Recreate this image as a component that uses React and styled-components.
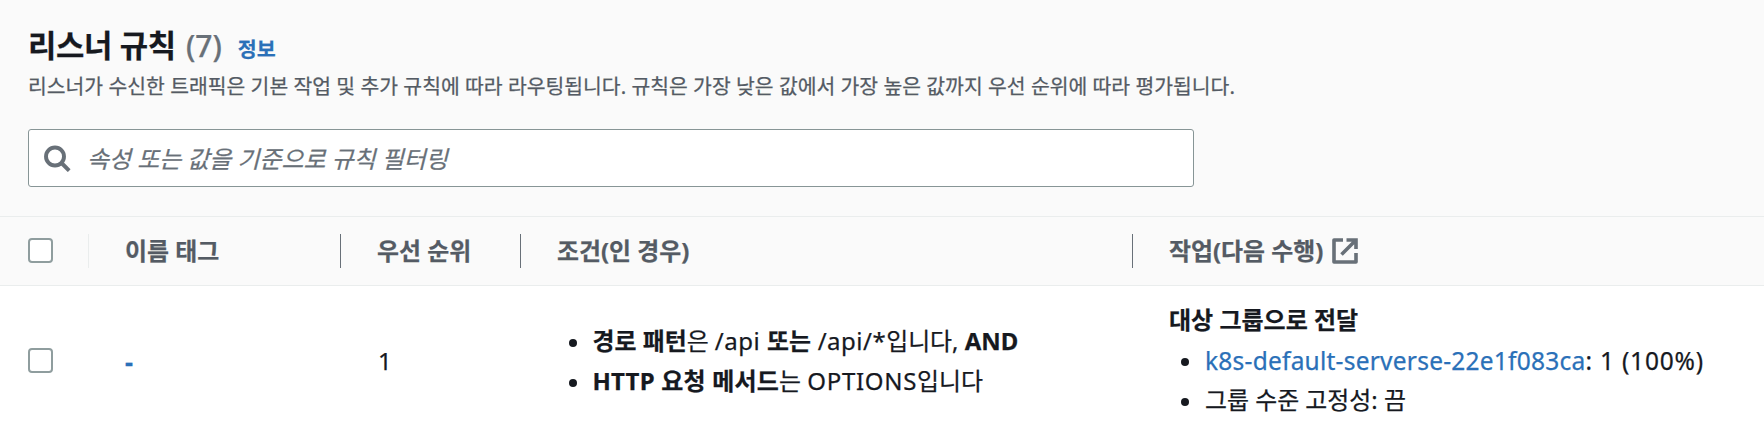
import React from "react";
import styled, { createGlobalStyle, css } from "styled-components";

const GlobalStyle = createGlobalStyle`
  * { box-sizing: border-box; }
  html, body { margin: 0; background: #fff; }
  body {
    font-family: "Noto Sans", "Noto Sans CJK KR", sans-serif;
    color: #16191f;
    font-size: 24px;
    overflow: hidden;
  }
`;

const Page = styled.main`
  width: 1764px;
  height: 434px;
  overflow: hidden;
  background: #fff;
  white-space: nowrap;
  -webkit-text-stroke: 0.25px;
`;

const Header = styled.header`
  height: 217px;
  padding: 25px 28px 0;
  background: #fafafa;
  border-bottom: 1px solid #eaeded;
`;

const TitleRow = styled.div`
  display: flex;
  align-items: baseline;
  height: 45px;
  line-height: 40px;
`;

const Title = styled.h1`
  margin: 0;
  font-size: 30.8px;
  font-weight: 700;
  line-height: 40px;
  letter-spacing: -0.3px;
`;

const Counter = styled.span`
  margin-left: 10px;
  font-size: 30px;
  font-weight: 500;
  color: #687078;
`;

const InfoLink = styled.a`
  margin-left: 16px;
  font-size: 20.6px;
  font-weight: 700;
  color: #2a70b8;
`;

const Description = styled.p`
  margin: 0;
  height: 32px;
  line-height: 32px;
  font-size: 20.43px;
  color: #545b64;
`;

const SearchBox = styled.div`
  display: flex;
  align-items: center;
  width: 1166px;
  height: 58px;
  margin-top: 27px;
  padding-left: 15px;
  background: #fff;
  border: 1px solid #879596;
  border-radius: 3px;
`;

const Placeholder = styled.span`
  margin: -2px 0 0 15px;
  font-size: 23.9px;
  font-style: italic;
  color: #687078;
`;

const Columns = css`
  display: grid;
  grid-template-columns: 88px 252px 180px 612px 1fr;
`;

const TableHead = styled.div`
  ${Columns}
  height: 69px;
  align-items: center;
  background: #fafafa;
  border-bottom: 1px solid #eaeded;
`;

const HeadCell = styled.div`
  display: flex;
  align-items: center;
  height: 34px;
  padding: 0 0 1px ${(p) => (p.$first ? 28 : 36)}px;
  border-left: ${(p) => (p.$first ? 0 : 1)}px solid ${(p) => (p.$faint ? "#eaeded" : "#687078")};
  font-size: 23.9px;
  font-weight: 700;
  line-height: 32px;
  color: #545b64;
`;

const TableRow = styled.div`
  ${Columns}
  height: 148px;
`;

const Cell = styled.div`
  padding: ${(p) => p.$top}px 0 0 ${(p) => p.$left ?? 37}px;
  line-height: 40px;
`;

const Checkbox = styled.span`
  display: block;
  width: 25px;
  height: 25px;
  background: #fff;
  border: 2px solid #8f9d9e;
  border-radius: 4px;
`;

const Link = styled.a`
  color: #2a70b8;
`;

const Dash = styled(Link)`
  font-weight: 700;
  font-size: 25px;
`;

const List = styled.ul`
  margin: 0;
  padding: 0;
  list-style: none;
`;

const Item = styled.li`
  display: flex;
  align-items: center;
  height: 40px;
  line-height: 40px;
  font-size: 23.9px;
  white-space: pre;

  &::before {
    content: "";
    width: 8px;
    height: 8px;
    margin: 3px ${(p) => p.$gap ?? 16}px 0 12px;
    border-radius: 50%;
    background: #16191f;
  }
`;

const Latin = styled.span`
  font-size: ${(p) => p.$size ?? 24}px;
  letter-spacing: ${(p) => p.$track}px;
`;

const TargetLine = styled.span`
  padding-top: 2px;
`;

const ActionTitle = styled.div`
  height: 40px;
  margin-top: -1px;
  padding-bottom: 1px;
  font-size: 24px;
  font-weight: 700;
`;

const SearchIcon = () => (
  <svg width="28" height="28" viewBox="0 0 28 28" fill="none" stroke="#687078" strokeWidth="3.9">
    <circle cx="11" cy="12.5" r="9" />
    <path d="M17.5 19 25.2 26.7" />
  </svg>
);

const ExternalIcon = styled(({ className }) => (
  <svg className={className} width="26" height="26" viewBox="0 0 26 26" fill="none" stroke="#687078" strokeWidth="3.6">
    <path d="M11 2H2V24H24V15" strokeLinejoin="round" />
    <path d="M14.5 2H24V11M23.5 2.5 9.5 16.5" />
  </svg>
))`
  margin-left: 9px;
`;

export default function App() {
  return (
    <Page>
      <GlobalStyle />
      <Header>
        <TitleRow>
          <Title>리스너 규칙</Title>
          <Counter>(7)</Counter>
          <InfoLink>정보</InfoLink>
        </TitleRow>
        <Description>
          리스너가 수신한 트래픽은 기본 작업 및 추가 규칙에 따라 라우팅됩니다. 규칙은 가장 낮은 값에서 가장 높은 값까지 우선 순위에 따라 평가됩니다.
        </Description>
        <SearchBox>
          <SearchIcon />
          <Placeholder>속성 또는 값을 기준으로 규칙 필터링</Placeholder>
        </SearchBox>
      </Header>
      <TableHead>
        <HeadCell $first><Checkbox /></HeadCell>
        <HeadCell $faint>이름 태그</HeadCell>
        <HeadCell>우선 순위</HeadCell>
        <HeadCell>조건(인 경우)</HeadCell>
        <HeadCell>작업(다음 수행)<ExternalIcon /></HeadCell>
      </TableHead>
      <TableRow>
        <Cell $top={62} $left={28}><Checkbox /></Cell>
        <Cell $top={55}><Dash>-</Dash></Cell>
        <Cell $top={55} $left={38}>1</Cell>
        <Cell $top={35}>
          <List>
            <Item $gap={15.5}>
              <b>경로 패턴</b>은 <Latin $track={0.5}>/api </Latin><b>또는</b><Latin $track={0.5}> /api/*</Latin>입니다, <b>AND</b>
            </Item>
            <Item $gap={15.5}>
              <Latin as="b" $track={0.2}>HTTP 요청 메서드</Latin>는 <Latin $track={0.7}>OPTIONS</Latin>입니다
            </Item>
          </List>
        </Cell>
        <Cell $top={15}>
          <ActionTitle>대상 그룹으로 전달</ActionTitle>
          <List>
            <Item>
              <TargetLine>
                <Link><Latin $size={24.5} $track={0.23}>k8s-default-serverse-22e1f083ca</Latin></Link>
                <Latin $size={24.5} $track={0.8}>: 1 (100%)</Latin>
              </TargetLine>
            </Item>
            <Item>그룹 수준 고정성: 끔</Item>
          </List>
        </Cell>
      </TableRow>
    </Page>
  );
}
